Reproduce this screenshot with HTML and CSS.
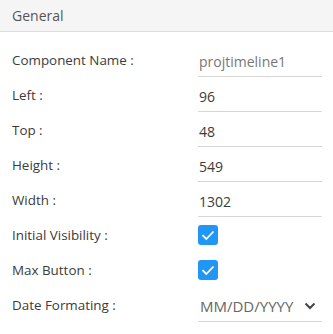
FILE: index.html
```html
<!DOCTYPE html>
<html>

<head>
    <title>General</title>
    <link rel="stylesheet" href="styles.css">
</head>

<body>
    <div class="panel">
        <div class="panel-head">General</div>
        <div class="panel-body">
            <div class="row">
                <label>Component Name :</label>
                <input class="field disabled" type="text" value="projtimeline1" readonly>
            </div>
            <div class="row">
                <label>Left :</label>
                <input class="field" type="text" value="96">
            </div>
            <div class="row">
                <label>Top :</label>
                <input class="field" type="text" value="48">
            </div>
            <div class="row">
                <label>Height :</label>
                <input class="field" type="text" value="549">
            </div>
            <div class="row">
                <label>Width :</label>
                <input class="field" type="text" value="1302">
            </div>
            <div class="row">
                <label>Initial Visibility :</label>
                <span class="check">
                    <svg width="20" height="20" viewBox="0 0 20 20">
                        <rect width="20" height="20" rx="3" fill="#2196f3"/>
                        <path d="M4.5 10.2 L8.3 14 L15.5 6.5" fill="none" stroke="#fff" stroke-width="1.8"/>
                    </svg>
                </span>
            </div>
            <div class="row">
                <label>Max Button :</label>
                <span class="check">
                    <svg width="20" height="20" viewBox="0 0 20 20">
                        <rect width="20" height="20" rx="3" fill="#2196f3"/>
                        <path d="M4.5 10.2 L8.3 14 L15.5 6.5" fill="none" stroke="#fff" stroke-width="1.8"/>
                    </svg>
                </span>
            </div>
            <div class="row">
                <label>Date Formating :</label>
                <div class="field select">
                    <span>MM/DD/YYYY</span>
                    <svg width="12" height="8" viewBox="0 0 12 8">
                        <path d="M1.5 1.5 L6 6 L10.5 1.5" fill="none" stroke="#444" stroke-width="2"/>
                    </svg>
                </div>
            </div>
        </div>
    </div>
</body>

</html>
```

FILE: styles.css
```css
body {
    margin: 0;
    background-color: white;
    font-family: "Open Sans", Lato, sans-serif;
    font-size: 13px;
    color: #3b3b3b;
}

.panel {
    width: 333px;
}

.panel-head {
    height: 31px;
    line-height: 31px;
    padding-left: 12px;
    background-color: #f5f5f5;
    border-bottom: solid 1px #dcdcdc;
    color: #555;
    font-size: 14px;
}

.panel-body {
    padding-top: 10px;
}

.row {
    display: grid;
    grid-template-columns: 186px 124px;
    align-items: center;
    padding-left: 12px;
    height: 35px;
}

.row label {
    font-size: 13.4px;
}

.field {
    box-sizing: border-box;
    width: 124px;
    height: 30px;
    border: none;
    border-bottom: solid 1px #d6d6d6;
    padding: 0 1px;
    font-family: inherit;
    font-size: 14px;
    color: #3b3b3b;
    background: transparent;
    outline: none;
    margin-top: 4px;
}

.field.disabled {
    color: #777;
}

.check {
    display: flex;
    height: 20px;
}

.select {
    display: flex;
    align-items: center;
    justify-content: space-between;
    padding-left: 2px;
    padding-right: 6px;
    color: #666;
    font-size: 15px;
}
```
